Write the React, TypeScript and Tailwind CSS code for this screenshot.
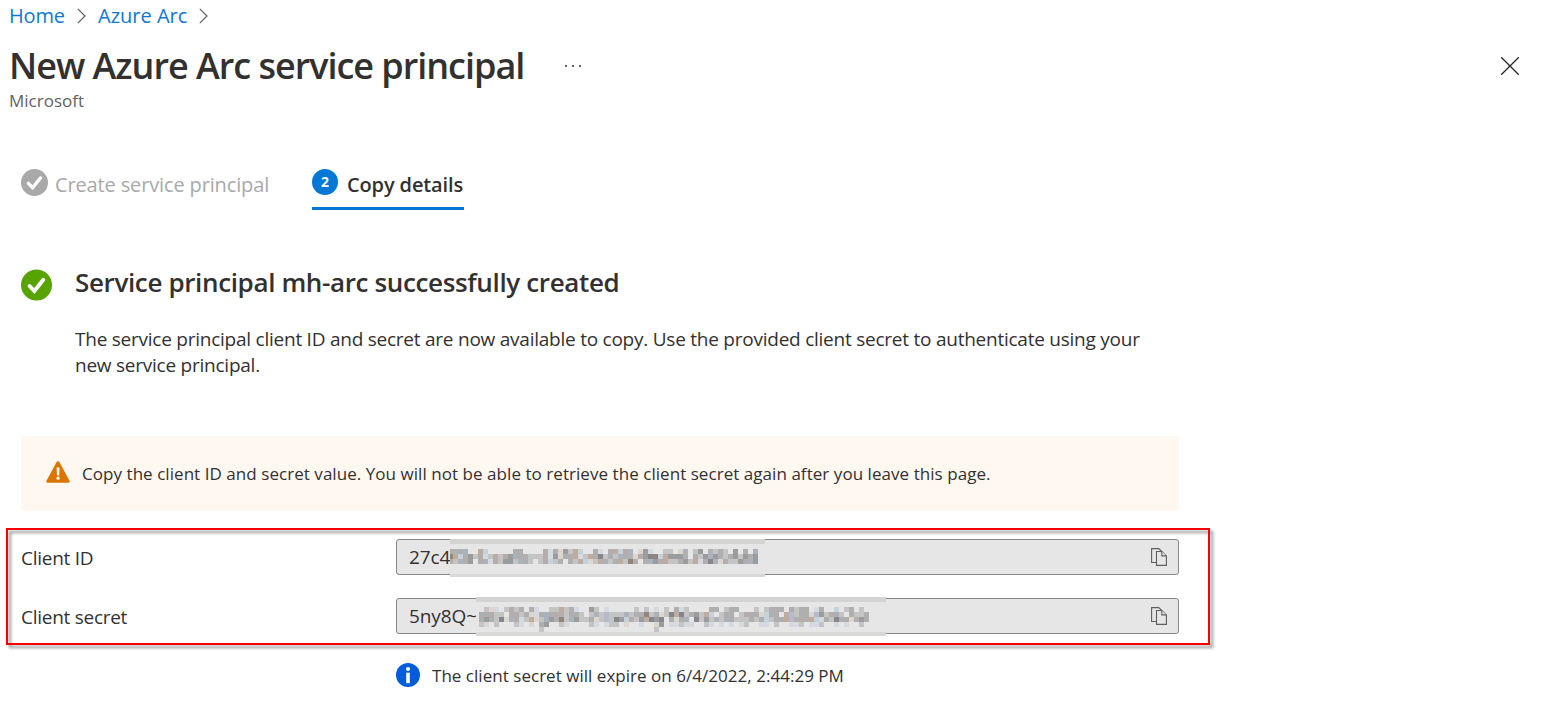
import type { ReactNode } from "react";

const palette: Record<string, string> = {
  a: "#afafaf",
  b: "#c4c4c4",
  c: "#9b9c9e",
  d: "#86868b",
  s: "#aab3bb",
  S: "#b4bacb",
  B: "#c3d3de",
  L: "#d5dae0",
  t: "#bfac9f",
  T: "#948479",
  p: "#b6acaa",
  y: "#dcd6cf",
};

const CELL = 5;

const clientIdCells = [
  "tsas..tB.....aa....pLaycbtB..aL.atBps.ycL..bb.ys.bc.sbab.c.a.s",
  "TtBacbpLbpbpcsaabbbpLcyaatLbtadbabsasypcdTBtccca.abcscabacbcac",
  "tbsac.psLpbccbsab.bpBba.abtBybtsbatbTa.ascatbbacbtLadsyabbcasc",
];

const secretCells = [
  ".byL.baba.aL..bbtbaL..cb.L.....b.b.L.b.aLb....aa.baa...b.baaa.abaa.La..B.ba.b.",
  "aaabb.apbayLasapabaab.bsbSbbbsbaaTbsybdtdbacbtB.baa.bpaayBaa.tSbaayScbpsb.abba",
  "acabdyspLbtybscaTbscbbaybSbdcBpbctdcd.ayas.dbcbsbsabbbabaBbaatSapatBLabdaayaca",
  "by.b...bL.y.ac..bL....bL.Lbb.y..L..yc.LLbLL..bL.L.L.Lb..LL.b..LLb.LLb..L.L..b.",
  "............b......................b..........................................",
];

function Redaction({ rows, offset, firstWidth = CELL, width, height, className }: {
  rows: string[];
  offset: number;
  firstWidth?: number;
  width: number;
  height: number;
  className: string;
}) {
  return (
    <div className={"absolute border-t-[5px] border-t-[#d3d3d2] border-b-[#d8d8d7] bg-[#e6e6e6] " + className}>
      <svg width={width} height={height} className="block" shapeRendering="crispEdges" aria-hidden="true">
        {rows.flatMap((row, y) =>
          row.split("").map((key, i) => {
            if (!palette[key]) return null;
            const x = i === 0 ? offset : offset + firstWidth + (i - 1) * CELL;
            return (
              <rect key={`${y}-${i}`} x={x} y={5 + y * CELL} width={i === 0 ? firstWidth : CELL} height={CELL} fill={palette[key]} />
            );
          }),
        )}
      </svg>
    </div>
  );
}

function Chevron() {
  return (
    <svg width="9" height="16" viewBox="0 0 9 16" fill="none" stroke="#605e5c" strokeWidth="1.2" className="block">
      <path d="M.8.8 8 8 .8 15.2" />
    </svg>
  );
}

function CheckCircle({ className }: { className: string }) {
  return (
    <svg viewBox="0 0 32 32" className={"block shrink-0 " + className}>
      <circle cx="16" cy="16" r="16" fill="currentColor" />
      <path d="m8.8 17 5 5.2L23 10.6" fill="none" stroke="#fff" strokeWidth="4" strokeLinecap="round" strokeLinejoin="miter" />
    </svg>
  );
}

function CopyIcon() {
  return (
    <svg width="16" height="18" viewBox="0 0 16 18" fill="#e6e6e6" stroke="#605e5c" strokeWidth="1.1" className="block">
      <path d="M.6.6h7.2l3 3v10.9H.6z" />
      <path d="M5.5 3.5h5.3l4.6 4.4v9.5H5.5z" />
      <path d="M10.8 3.5v4.4h4.6" />
    </svg>
  );
}

function Field({ label, value, children }: { label: string; value: string; children: ReactNode }) {
  return (
    <div className="flex h-9 items-center">
      <div className="w-[375px] pt-0.5 text-[19px] leading-9 tracking-[-0.27px]">{label}</div>
      <div className="relative flex h-9 w-[783px] items-center justify-between rounded-[3px] border border-[#8a8886] bg-[#e6e6e6] pr-[11px] pl-3">
        <span className="text-[19px] leading-[34px] tracking-[-0.1px]">{value}</span>
        <CopyIcon />
        {children}
      </div>
    </div>
  );
}

export default function App() {
  return (
    <div className="relative h-[723px] w-[1541px] overflow-hidden bg-white font-['Open_Sans','Noto_Sans',sans-serif] text-[#323130]">
      <nav className="flex h-[31px] items-center pl-[9px] text-[20px] leading-[30px] text-[#0f78d0]">
        <span className="w-[68px] tracking-[-0.2px]">Home</span>
        <Chevron />
        <span className="ml-3 w-[101px]">Azure Arc</span>
        <Chevron />
      </nav>

      <header className="flex h-[81px] items-start justify-between pt-[10px] pr-[21px] pl-[9px]">
        <div>
          <div className="flex h-12 items-center">
            <h1 className="w-[555px] pt-[2px] text-[36px] leading-[48px] font-semibold tracking-[-1.02px] whitespace-nowrap">New Azure Arc service principal</h1>
            <svg width="18" height="4" fill="#323130" className="mt-[2px]">
              <circle cx="2" cy="2" r="1" />
              <circle cx="9" cy="2" r="1" />
              <circle cx="16" cy="2" r="1" />
            </svg>
          </div>
          <p className="text-[17px] leading-6 text-[#646260]">Microsoft</p>
        </div>
        <svg width="20" height="20" viewBox="0 0 20 20" stroke="#252423" strokeWidth="1.3" className="mt-[15px] block">
          <path d="m1.2 1.2 17.6 17.6M18.8 1.2 1.2 18.8" />
        </svg>
      </header>

      <div className="mt-14 ml-[21px] flex h-[42px]">
        <div className="flex w-[291px] items-start">
          <CheckCircle className="mt-[1px] size-[27px] text-[#a9a9a9]" />
          <span className="ml-[7px] pt-[5px] text-[20px] leading-6 tracking-[-0.14px] text-[#a9a9a9]">Create service principal</span>
        </div>
        <div className="flex w-[152px] items-start border-b-[3px] border-[#0078d4]">
          <span className="mt-[1px] flex size-[26px] items-center justify-center rounded-full bg-[#0078d4] text-[14px] leading-none font-bold text-white">2</span>
          <span className="ml-[9px] pt-[5px] text-[20px] leading-6 font-semibold tracking-[-0.13px] whitespace-nowrap text-[#323130]">Copy details</span>
        </div>
      </div>

      <section className="mt-[59px] ml-[21px] flex">
        <CheckCircle className="h-8 w-[31px] text-[#57a300]" />
        <div className="ml-[23px] w-[1090px]">
          <h2 className="-mt-[1px] text-[26px] leading-7 font-semibold tracking-[-0.36px]">Service principal mh-arc successfully created</h2>
          <p className="mt-[30px] text-[19px] leading-[26px] tracking-[-0.24px]">
            The service principal client ID and secret are now available to copy. Use the provided client secret to authenticate using your
            <br />
            new service principal.
          </p>
        </div>
      </section>

      <div className="mt-[58px] ml-[21px] flex h-[75px] w-[1158px] items-center rounded-[3px] bg-[#fff8f1] pl-[25px]">
        <svg width="24" height="22" viewBox="0 0 24 22" className="-mt-1 block">
          <path d="M12 .3c.7 0 1.2.4 1.5.9l10 18.6c.6 1 0 1.9-1 1.9h-21c-1 0-1.6-.9-1-1.9l10-18.6c.3-.5.8-.9 1.5-.9z" fill="#db7500" />
          <path d="M10.6 6.6h2.9l-.4 8h-2.1z" fill="#fff" />
          <circle cx="12.05" cy="17.2" r="1.6" fill="#fff" />
        </svg>
        <span className="ml-3 text-[17px] leading-6 tracking-[0.05px]">Copy the client ID and secret value. You will not be able to retrieve the client secret again after you leave this page.</span>
      </div>

      <section className="relative mt-[17px] ml-1.5 flex h-[117px] w-[1204px] flex-col gap-[23px] pt-[11px] pl-[15px]">
        <div className="pointer-events-none absolute inset-0 border-2 border-[#f80000] drop-shadow-[3px_3px_1.5px_rgba(0,0,0,0.45)]" />
        <Field label="Client ID" value="27c4">
          <Redaction rows={clientIdCells} offset={0} firstWidth={3} width={315} height={30} className="-top-px left-[53px] border-b-[3px]" />
        </Field>
        <Field label="Client secret" value="5ny8Q~">
          <Redaction rows={secretCells} offset={3} width={410} height={30} className="-top-[2px] left-[79px] border-b-4" />
        </Field>
      </section>

      <div className="mt-[18px] ml-[396px] flex h-6 items-center">
        <svg width="24" height="24" viewBox="0 0 24 24" className="block">
          <circle cx="12" cy="12" r="12" fill="#015cda" />
          <circle cx="12" cy="6" r="2" fill="#fff" />
          <path d="M10.2 9.7h3.6v10.5h-3.6z" fill="#fff" />
        </svg>
        <span className="ml-3 pt-px text-[17px] leading-6 tracking-[0.03px]">The client secret will expire on 6/4/2022, 2:44:29 PM</span>
      </div>
    </div>
  );
}
